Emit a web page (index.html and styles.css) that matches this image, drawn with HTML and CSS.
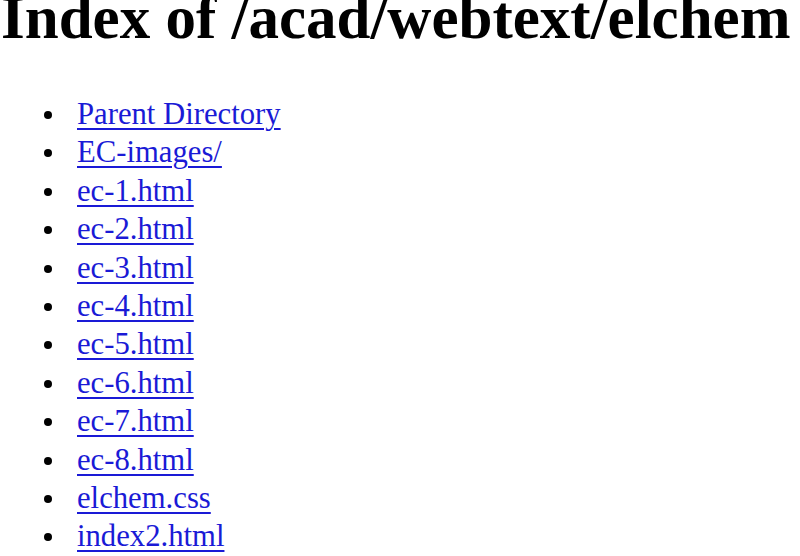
FILE: index.html
```html
<!DOCTYPE html>
<html lang="en">
<head>
    <meta charset="UTF-8">
    <title>Index of /acad/webtext/elchem</title>
    <link rel="stylesheet" href="styles.css">
</head>
<body>
    <h1>Index of /acad/webtext/elchem</h1>
    <ul class="listing">
        <li><a href="#">Parent Directory</a></li>
        <li><a href="#">EC-images/</a></li>
        <li><a href="#">ec-1.html</a></li>
        <li><a href="#">ec-2.html</a></li>
        <li><a href="#">ec-3.html</a></li>
        <li><a href="#">ec-4.html</a></li>
        <li><a href="#">ec-5.html</a></li>
        <li><a href="#">ec-6.html</a></li>
        <li><a href="#">ec-7.html</a></li>
        <li><a href="#">ec-8.html</a></li>
        <li><a href="#">elchem.css</a></li>
        <li><a href="#">index2.html</a></li>
    </ul>
</body>
</html>
```

FILE: styles.css
```css
body {
    margin: 0 0 0 1px;
    font-family: "Liberation Serif", "Times New Roman", serif;
    font-size: 30.7px;
    color: #000;
    background: #fff;
}

h1 {
    font-size: 61px;
    font-weight: bold;
    margin: -17px 0 42px 0;
    white-space: nowrap;
}

.listing {
    margin: 0;
    padding-left: 76px;
    line-height: 38.4px;
    list-style: none;
}

/* bullet drawn by hand so it sits further from the text */
.listing li {
    position: relative;
}

.listing li::before {
    content: "";
    position: absolute;
    left: -33px;
    top: 16px;
    width: 8px;
    height: 8px;
    border-radius: 50%;
    background: #000;
}

.listing a {
    color: #1a1ad6;
    text-decoration-thickness: 2px;
    text-underline-offset: 4px;
}
```
